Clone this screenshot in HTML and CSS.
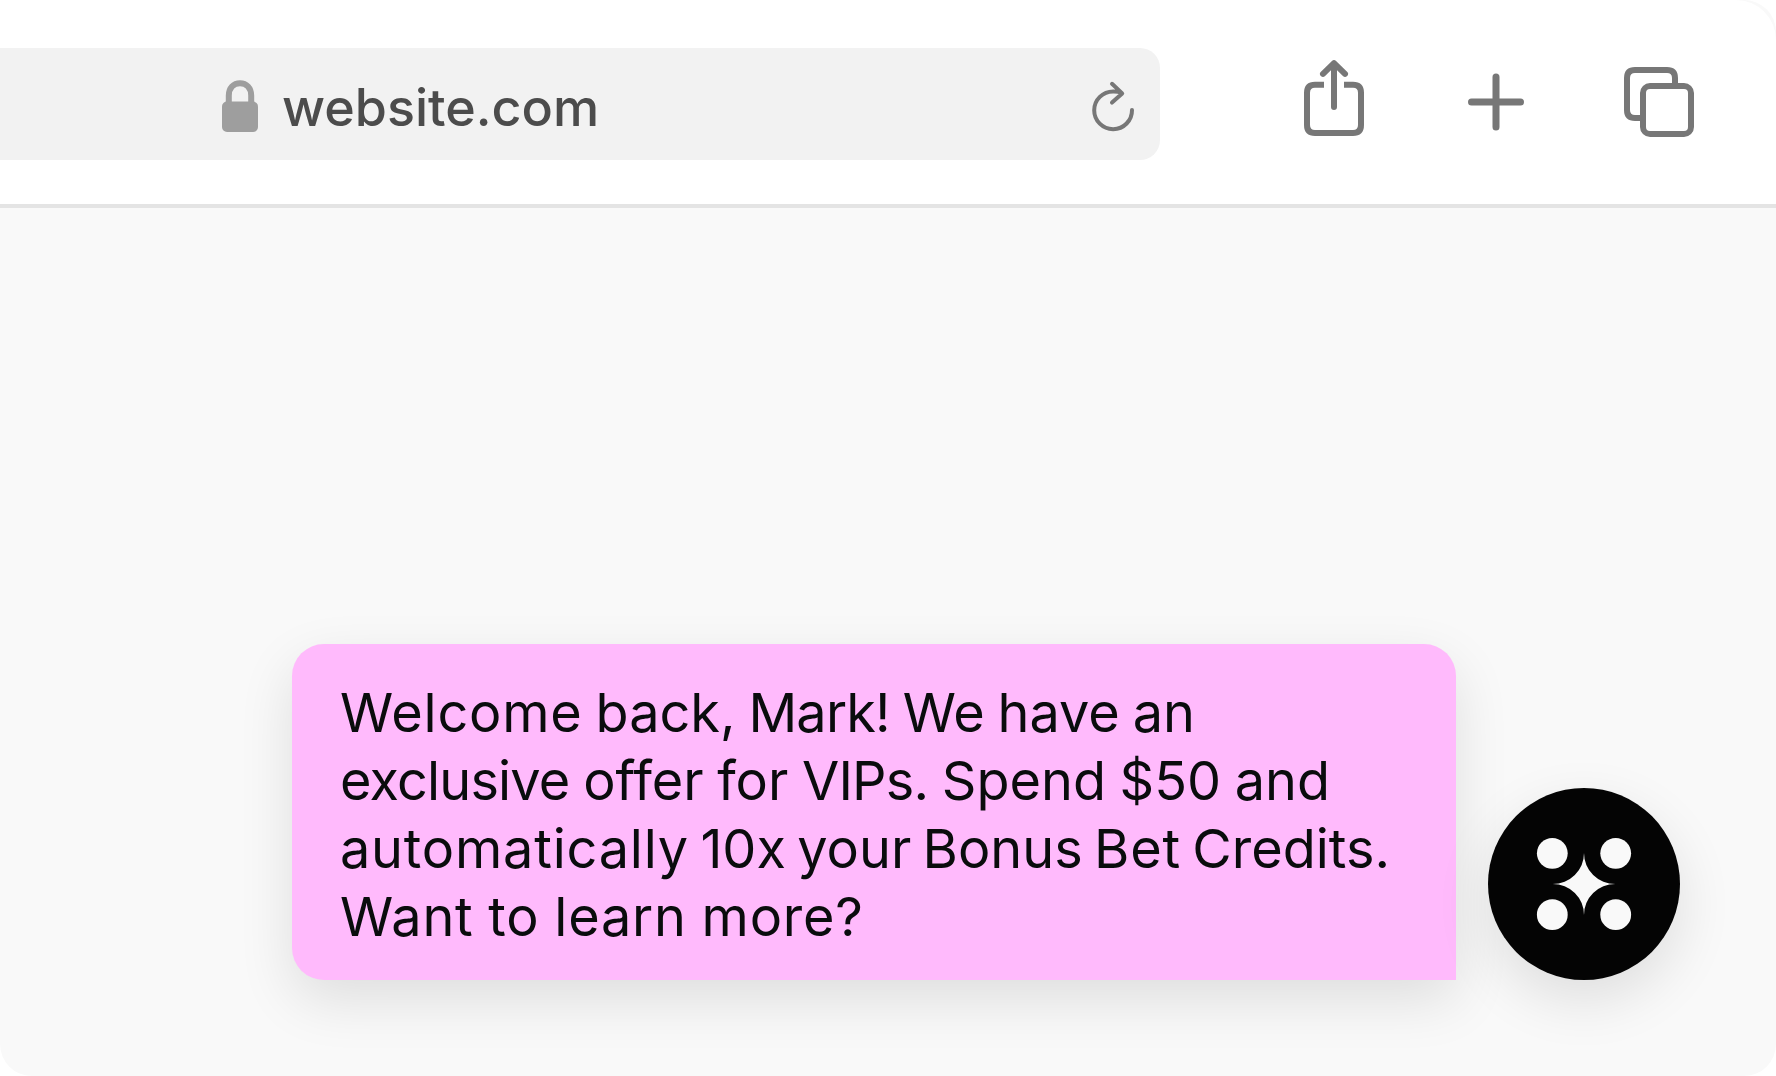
FILE: index.html
```html
<!DOCTYPE html>
<html lang="en">
<head>
    <meta charset="UTF-8">
    <title>website.com</title>
    <link rel="stylesheet" href="styles.css">
</head>
<body>
    <div class="browser">
        <header class="toolbar">
            <div class="address-bar">
                <svg class="lock" width="36" height="53" viewBox="0 0 36 53">
                    <path d="M6.8 24V15.5C6.8 8 11.5 3.2 18 3.2S29.2 8 29.2 15.5V24" fill="none" stroke="#9e9e9e" stroke-width="6"/>
                    <rect y="21.6" width="36" height="30.4" rx="5" fill="#9e9e9e"/>
                </svg>
                <span class="url">website.com</span>
                <svg class="reload" width="44" height="54" viewBox="0 0 44 54">
                    <path d="M40 30A18.9 18.9 0 1 1 21.3 11.4Q26 11.3 29.6 12.9M20 3.8L30.2 13.4L20 22.6"/>
                </svg>
            </div>
            <nav class="actions">
                <svg width="60" height="78" viewBox="0 0 60 78">
                    <path d="M20 25.8H11Q3 25.8 3 33.8V66Q3 74 11 74H49Q57 74 57 66V33.8Q57 25.8 49 25.8H40" stroke-linecap="butt"/>
                    <path d="M30 48V5M19 14.8L30 4.2L41 14.8"/>
                </svg>
                <svg class="plus" width="56" height="58" viewBox="0 0 56 58">
                    <path d="M3.5 29H52.5M28 4V54"/>
                </svg>
                <svg width="70" height="70" viewBox="0 0 70 70">
                    <path d="M16 51H11Q3 51 3 43V11Q3 3 11 3H43Q51 3 51 11V16" stroke-linecap="butt"/>
                    <rect x="19" y="19" width="48" height="48" rx="7"/>
                </svg>
            </nav>
        </header>

        <main class="page">
            <div class="chat">
                <p class="bubble">
                    <span class="line"><span class="wide">Welcome</span> back, <span class="tight">Mark!</span> We have an</span>
                    <span class="line"><span class="tight">exclusive</span> offer for <span class="tight">VIPs.</span> Spend $50 and</span>
                    <span class="line"><span class="wide">automatically</span> 10x your Bonus <span class="wide">Bet</span> Credits.</span>
                    <span class="line wide">Want to learn more?</span>
                </p>
                <div class="avatar">
                    <svg width="96" height="94" viewBox="-48 -47 96 94" fill="#f9f9f9">
                        <circle cx="-31.7" cy="-30.7" r="15.4"/>
                        <circle cx="31.7" cy="-30.7" r="15.4"/>
                        <circle cx="-31.7" cy="30.7" r="15.4"/>
                        <circle cx="31.7" cy="30.7" r="15.4"/>
                        <path d="M0 -31A31.3 30.8 0 0 0 31.5 0A31.3 30.8 0 0 0 0 31A31.3 30.8 0 0 0 -31.5 0A31.3 30.8 0 0 0 0 -31Z"/>
                    </svg>
                </div>
            </div>
        </main>
    </div>
</body>
</html>
```

FILE: styles.css
```css
body {
    margin: 0;
    background: white;
    font-family: Inter, 'Liberation Sans', sans-serif;
}

.browser {
    display: flex;
    flex-direction: column;
    height: 1076px;
    background: #f9f9f9;
    border-radius: 0 32px 32px 32px;
    overflow: hidden;
}

.toolbar {
    display: flex;
    height: 204px;
    background: white;
    border-bottom: 4px solid #e4e4e4;
    border-top-right-radius: 40px;
}

.address-bar {
    display: flex;
    box-sizing: border-box;
    width: 1160px;
    height: 112px;
    margin-top: 48px;
    padding: 32px 24px 0 222px;
    background: #f2f2f2;
    border-radius: 0 20px 20px 0;
}

.url {
    margin: -4px 0 0 24px;
    color: #4c4c4c;
    font-size: 52px;
    line-height: 64px;
    font-weight: 500;
}

.reload {
    margin-left: auto;
    fill: none;
    stroke: #777;
    stroke-width: 4;
    stroke-linecap: round;
    stroke-linejoin: round;
}

.actions {
    display: flex;
    flex: 1;
    align-items: flex-start;
    padding: 59px 0 0 144px;
    fill: none;
    stroke: #777;
    stroke-width: 6;
    stroke-linecap: round;
    stroke-linejoin: round;
}

.actions svg:last-child {
    margin: 8px 0 0 100px;
}

.actions .plus {
    margin: 14px 0 0 104px;
    stroke-width: 7;
}

.page {
    display: flex;
    flex: 1;
    justify-content: flex-end;
    align-items: flex-end;
    padding: 0 96px 96px;
}

.chat {
    display: flex;
    align-items: flex-end;
    gap: 32px;
}

.bubble {
    box-sizing: border-box;
    width: 1164px;
    height: 336px;
    margin: 0;
    padding: 35px 0 29px 48px;
    background: #ffbafc;
    border-radius: 32px 32px 0 32px;
    box-shadow: 0 20px 56px rgba(0, 0, 0, 0.11);
    color: #0a0c0d;
    font-size: 54px;
    line-height: 68px;
    word-spacing: -2.3px;
}

.line {
    display: block;
    white-space: nowrap;
}

.line:nth-child(2) {
    word-spacing: -1.6px;
}

.line:nth-child(3) {
    word-spacing: -3.8px;
}

.line:nth-child(4) {
    word-spacing: -1.2px;
}

.wide {
    letter-spacing: 0.8px;
}

.tight {
    letter-spacing: -0.8px;
}

.avatar {
    display: flex;
    align-items: center;
    justify-content: center;
    width: 192px;
    height: 192px;
    border-radius: 50%;
    background: #040404;
    box-shadow: 0 20px 56px rgba(0, 0, 0, 0.11);
}
```
